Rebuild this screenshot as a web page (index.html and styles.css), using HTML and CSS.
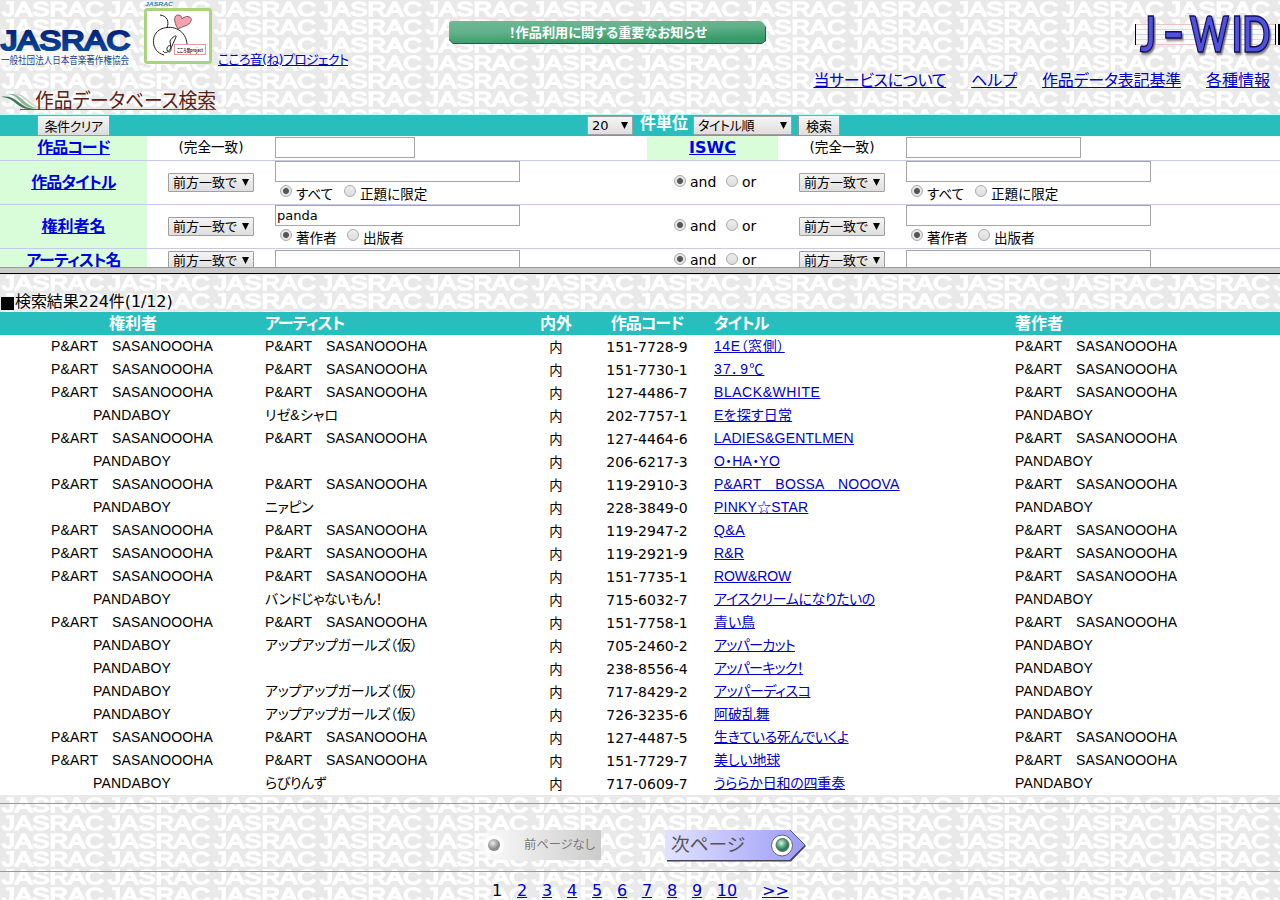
FILE: index.html
```html
<!DOCTYPE html>
<html lang="ja">
<head>
<meta charset="utf-8">
<title>J-WID 作品データベース検索</title>
<link rel="stylesheet" href="styles.css">
</head>
<body>
<section class="frame search-frame">
  <header class="masthead">
    <div class="brand">
      <svg class="logo" width="132" height="38" viewBox="0 28 132 38">
        <defs><linearGradient id="navy" x2="0" y2="1"><stop offset="0.2" stop-color="#06257c"/><stop offset="1" stop-color="#0b519f"/></linearGradient></defs>
        <rect y="50" width="131" height="15" fill="#fff" opacity=".65"/>
        <text class="wordmark" x="1" y="50" textLength="129" lengthAdjust="spacingAndGlyphs">JASRAC</text>
        <text class="company" x="1" y="64" textLength="128" lengthAdjust="spacingAndGlyphs">一般社団法人日本音楽著作権協会</text>
      </svg>
      <svg class="kokorone" width="70" height="65" viewBox="143 0 70 65">
        <text class="mini" x="145" y="6" textLength="28" lengthAdjust="spacingAndGlyphs">JASRAC</text>
        <rect x="145.500" y="9.500" width="65" height="53" rx="2" fill="#fff" stroke="#a9d47d" stroke-width="3"/>
        <path d="M160 15c8 1 9 7 7 13M164 55c-13-3-14-21-3-26 13-5 25 2 26 15M163 51c2 4 7 0 9-5l4-9c1-3-5 1-6 4l1 8c0 5-5 3-4-1 1-3 4-3 4-1" fill="none" stroke="#222"/>
        <path d="M178 29c-5-8-4-14 0-14 3 0 4 2 4 4 3-4 11-3 9 2-2 5-8 5-13 8z" fill="#f9a0ae" stroke="#644" stroke-width=".8"/>
        <rect x="174.500" y="44.500" width="31" height="10" fill="#fff" stroke="#e59aa2"/>
        <text class="tiny" x="177" y="51.500" textLength="26" lengthAdjust="spacingAndGlyphs">こころ音project</text>
      </svg>
      <a class="project" href="#">こころ音(ね)プロジェクト</a>
    </div>
    <svg class="notice" width="320" height="26" viewBox="447 19 320 26">
      <defs><linearGradient id="green" x2=".35" y2="1"><stop offset="0" stop-color="#6dba95"/><stop offset=".5" stop-color="#61b18a"/><stop offset="1" stop-color="#379a68"/></linearGradient></defs>
      <path d="M451 22h310l5 5v14l-4 3H453l-4-4z" fill="#245f43"/>
      <path d="M452 21h308q5 2 5 5v13q0 4-4 4H453l-4-4V24q0-3 3-3z" fill="url(#green)"/>
      <text x="509" y="37" textLength="198" lengthAdjust="spacingAndGlyphs">！作品利用に関する重要なお知らせ</text>
    </svg>
    <div class="right">
      <svg class="jwid" width="145" height="46" viewBox="1135 12 145 46">
        <rect x="1136" y="24" width="143" height="21" fill="#fff" opacity=".6"/>
        <path d="M1136 24.500h140M1136 44.500h140" stroke="#ebc4c4"/>
        <path d="M1136 29.500h140M1136 39.500h140" stroke="#d8d8e6"/><path d="M1136 34.500h140" stroke="#bee0e4"/>
        <path d="M1135.500 24v21M1275.500 24v21" stroke="#000"/><path d="M1279 24v21" stroke="#000" stroke-width="2"/>
        <text transform="translate(1140) scale(.75 1)" y="52">J<tspan class="dash" x="29" y="60">-</tspan><tspan x="66 122 136" y="52">WID</tspan></text>
      </svg>
      <nav class="menu">
        <a class="tight" href="#">当サービスについて</a><a href="#">ヘルプ</a><a class="slim" href="#">作品データ表記基準</a><a href="#">各種情報</a>
      </nav>
    </div>
  </header>
  <svg class="heading" width="220" height="26" viewBox="0 88 220 26">
    <path d="M12 94c15-3 17 13 34 14-20 1-18-13-34-14z" fill="#cbdccd"/>
    <path d="M7 94c14-3 18 14 32 14-20 2-17-13-32-14z" fill="#8ab596"/>
    <path d="M1 97c17-3 17 12 35 12-21 2-18-11-35-12z" fill="#31794b"/>
    <path d="M20 109.500h196" stroke="#31794b"/>
    <text x="35" y="108" textLength="181" lengthAdjust="spacingAndGlyphs">作品データベース検索</text>
  </svg>
  <form class="search">
    <div class="toolbar">
      <button class="clear" type="button">条件クリア</button>
      <select class="count"><option>20</option></select>
      <b>件単位</b>
      <select class="order"><option>タイトル順</option></select>
      <button class="go" type="button">検索</button>
    </div>
    <div class="row short">
      <div class="label"><a class="kana" href="#">作品コード</a></div>
      <div class="match">(完全一致)</div>
      <div class="field"><input class="w140" type="text"></div>
      <div class="label"><a href="#">ISWC</a></div>
      <div class="match">(完全一致)</div>
      <div class="field"><input class="w175" type="text"></div>
    </div>
    <div class="row">
      <div class="label"><a class="kana" href="#">作品タイトル</a></div>
      <div class="match"><select><option>前方一致で</option></select></div>
      <div class="field"><input type="text"><div class="opts"><input type="radio" name="t1" checked><span class="o1">すべて</span><input type="radio" name="t1"><span>正題に限定</span></div></div>
      <div class="logic"><input type="radio" name="l1" checked><span>and</span><input type="radio" name="l1"><span>or</span></div>
      <div class="match"><select><option>前方一致で</option></select></div>
      <div class="field"><input type="text"><div class="opts"><input type="radio" name="t2" checked><span class="o1">すべて</span><input type="radio" name="t2"><span>正題に限定</span></div></div>
    </div>
    <div class="row">
      <div class="label"><a href="#">権利者名</a></div>
      <div class="match"><select><option>前方一致で</option></select></div>
      <div class="field"><input type="text" value="panda"><div class="opts"><input type="radio" name="r1" checked><span class="o2">著作者</span><input type="radio" name="r1"><span>出版者</span></div></div>
      <div class="logic"><input type="radio" name="l2" checked><span>and</span><input type="radio" name="l2"><span>or</span></div>
      <div class="match"><select><option>前方一致で</option></select></div>
      <div class="field"><input type="text"><div class="opts"><input type="radio" name="r2" checked><span class="o2">著作者</span><input type="radio" name="r2"><span>出版者</span></div></div>
    </div>
    <div class="row last">
      <div class="label"><a class="kana" href="#">アーティスト名</a></div>
      <div class="match"><select><option>前方一致で</option></select></div>
      <div class="field"><input type="text"></div>
      <div class="logic"><input type="radio" name="l3" checked><span>and</span><input type="radio" name="l3"><span>or</span></div>
      <div class="match"><select><option>前方一致で</option></select></div>
      <div class="field"><input type="text"></div>
    </div>
  </form>
</section>
<section class="frame results-frame">
  <p class="summary"><i class="square"></i>検索結果224件(1/12)</p>
  <table class="results">
    <colgroup><col class="c1"><col class="c2"><col class="c3"><col class="c4"><col class="c5"><col class="c6"></colgroup>
    <thead><tr><th>権利者</th><th class="kana">アーティスト</th><th>内外</th><th class="kana">作品コード</th><th class="kana">タイトル</th><th>著作者</th></tr></thead>
    <tbody>
    <tr><td>P&amp;ART　SASANOOOHA</td><td>P&amp;ART　SASANOOOHA</td><td>内</td><td>151-7728-9</td><td><a class="wide" href="#">14E（窓側）</a></td><td>P&amp;ART　SASANOOOHA</td></tr>
    <tr><td>P&amp;ART　SASANOOOHA</td><td>P&amp;ART　SASANOOOHA</td><td>内</td><td>151-7730-1</td><td><a class="wider" href="#">37．9℃</a></td><td>P&amp;ART　SASANOOOHA</td></tr>
    <tr><td>P&amp;ART　SASANOOOHA</td><td>P&amp;ART　SASANOOOHA</td><td>内</td><td>127-4486-7</td><td><a class="wide" href="#">BLACK&amp;WHITE</a></td><td>P&amp;ART　SASANOOOHA</td></tr>
    <tr><td>PANDABOY</td><td>リゼ&amp;シャロ</td><td>内</td><td>202-7757-1</td><td><a href="#">Eを探す日常</a></td><td>PANDABOY</td></tr>
    <tr><td>P&amp;ART　SASANOOOHA</td><td>P&amp;ART　SASANOOOHA</td><td>内</td><td>127-4464-6</td><td><a href="#">LADIES&amp;GENTLMEN</a></td><td>P&amp;ART　SASANOOOHA</td></tr>
    <tr><td>PANDABOY</td><td></td><td>内</td><td>206-6217-3</td><td><a href="#">O・HA・YO</a></td><td>PANDABOY</td></tr>
    <tr><td>P&amp;ART　SASANOOOHA</td><td>P&amp;ART　SASANOOOHA</td><td>内</td><td>119-2910-3</td><td><a href="#">P&amp;ART　BOSSA　NOOOVA</a></td><td>P&amp;ART　SASANOOOHA</td></tr>
    <tr><td>PANDABOY</td><td class="narrow">ニァピン</td><td>内</td><td>228-3849-0</td><td><a href="#">PINKY☆STAR</a></td><td>PANDABOY</td></tr>
    <tr><td>P&amp;ART　SASANOOOHA</td><td>P&amp;ART　SASANOOOHA</td><td>内</td><td>119-2947-2</td><td><a class="wide" href="#">Q&amp;A</a></td><td>P&amp;ART　SASANOOOHA</td></tr>
    <tr><td>P&amp;ART　SASANOOOHA</td><td>P&amp;ART　SASANOOOHA</td><td>内</td><td>119-2921-9</td><td><a href="#">R&amp;R</a></td><td>P&amp;ART　SASANOOOHA</td></tr>
    <tr><td>P&amp;ART　SASANOOOHA</td><td>P&amp;ART　SASANOOOHA</td><td>内</td><td>151-7735-1</td><td><a class="even" href="#">ROW&amp;ROW</a></td><td>P&amp;ART　SASANOOOHA</td></tr>
    <tr><td>PANDABOY</td><td class="narrow">バンドじゃないもん！</td><td>内</td><td>715-6032-7</td><td><a class="narrow" href="#">アイスクリームになりたいの</a></td><td>PANDABOY</td></tr>
    <tr><td>P&amp;ART　SASANOOOHA</td><td>P&amp;ART　SASANOOOHA</td><td>内</td><td>151-7758-1</td><td><a class="even" href="#">青い鳥</a></td><td>P&amp;ART　SASANOOOHA</td></tr>
    <tr><td>PANDABOY</td><td class="slim">アップアップガールズ（仮）</td><td>内</td><td>705-2460-2</td><td><a class="narrower" href="#">アッパーカット</a></td><td>PANDABOY</td></tr>
    <tr><td>PANDABOY</td><td></td><td>内</td><td>238-8556-4</td><td><a class="narrower" href="#">アッパーキック！</a></td><td>PANDABOY</td></tr>
    <tr><td>PANDABOY</td><td class="slim">アップアップガールズ（仮）</td><td>内</td><td>717-8429-2</td><td><a class="narrow" href="#">アッパーディスコ</a></td><td>PANDABOY</td></tr>
    <tr><td>PANDABOY</td><td class="slim">アップアップガールズ（仮）</td><td>内</td><td>726-3235-6</td><td><a class="even" href="#">阿破乱舞</a></td><td>PANDABOY</td></tr>
    <tr><td>P&amp;ART　SASANOOOHA</td><td>P&amp;ART　SASANOOOHA</td><td>内</td><td>127-4487-5</td><td><a class="narrow" href="#">生きている死んでいくよ</a></td><td>P&amp;ART　SASANOOOHA</td></tr>
    <tr><td>P&amp;ART　SASANOOOHA</td><td>P&amp;ART　SASANOOOHA</td><td>内</td><td>151-7729-7</td><td><a class="slim" href="#">美しい地球</a></td><td>P&amp;ART　SASANOOOHA</td></tr>
    <tr><td>PANDABOY</td><td class="narrow">らびりんず</td><td>内</td><td>717-0609-7</td><td><a class="slim" href="#">うららか日和の四重奏</a></td><td>PANDABOY</td></tr>
    </tbody>
  </table>
  <div class="pager">
    <svg width="122" height="34" viewBox="480 829 122 34">
      <defs>
        <linearGradient id="grey"><stop offset="0" stop-color="#fff" stop-opacity=".5"/><stop offset=".25" stop-color="#f2f2f2"/><stop offset="1" stop-color="#ccc"/></linearGradient>
        <radialGradient id="pearl" cx=".4" cy=".35"><stop offset="0" stop-color="#eee"/><stop offset="1" stop-color="#888"/></radialGradient>
      </defs>
      <path d="M474 845l15-15h112v30H489z" fill="url(#grey)"/>
      <circle cx="494" cy="845" r="10" fill="#fff" opacity=".8"/><circle cx="494" cy="845" r="6" fill="url(#pearl)"/>
      <text class="prev" x="524" y="849" textLength="71" lengthAdjust="spacingAndGlyphs">前ページなし</text>
    </svg>
    <svg width="144" height="34" viewBox="664 829 144 34">
      <defs>
        <linearGradient id="violet"><stop offset="0" stop-color="#e2e2ff"/><stop offset="1" stop-color="#9c9cf8"/></linearGradient>
        <radialGradient id="jade" cx=".4" cy=".35"><stop offset="0" stop-color="#d8f4e6"/><stop offset=".6" stop-color="#5fae88"/><stop offset="1" stop-color="#33795a"/></radialGradient>
      </defs>
      <path d="M667 832h124l15 14-15 15.500H667z" fill="#445"/>
      <path d="M665 830h125l15 15-15 15H665z" fill="url(#violet)"/>
      <path d="M790 830l15 15-15 15" fill="none" stroke="#557" />
      <circle cx="782" cy="845.500" r="10.500" fill="#fff" stroke="#666"/><circle cx="782.500" cy="845" r="6.500" fill="url(#jade)" stroke="#576"/>
      <text class="next" x="671" y="851" textLength="74" lengthAdjust="spacingAndGlyphs">次ページ</text>
    </svg>
  </div>
  <nav class="pages"><span>1</span><a href="#">2</a><a href="#">3</a><a href="#">4</a><a href="#">5</a><a href="#">6</a><a href="#">7</a><a href="#">8</a><a href="#">9</a><a href="#">10</a><a class="fwd" href="#">&gt;&gt;</a></nav>
</section>
</body>
</html>
```
FILE: styles.css
```css
* { box-sizing: border-box; }
body {
  margin: 0;
  height: 900px;
  overflow: hidden;
  font: 16px/20px "DejaVu Sans", "Noto Sans CJK JP", sans-serif;
  font-feature-settings: "palt";
  color: #000;
}
a { color: #0000cc; }
svg { display: block; overflow: visible; }
svg text { font-family: "Noto Sans CJK JP", sans-serif; }

.frame {
  overflow: hidden;
  background: #e9e9e9 url("data:image/svg+xml,%3Csvg xmlns='http://www.w3.org/2000/svg' width='106' height='18'%3E%3Ctext x='2' y='15.500' textLength='102' lengthAdjust='spacingAndGlyphs' font-family='Liberation Sans' font-size='20.500' fill='white' stroke='white' stroke-width='1.500'%3EJASRAC%3C/text%3E%3C/svg%3E");
}
.search-frame { height: 274px; border-bottom: 1px solid #000; position: relative; }
.search-frame::after { content: ""; position: absolute; left: 0; right: 0; bottom: 0; height: 5px; background: #ccc; border-top: 1px solid #999; }
.results-frame { height: 626px; }

.masthead { display: flex; height: 88px; }
.brand { display: flex; width: 447px; height: 70px; }
.logo { margin-top: 28px; }
.kokorone { margin-left: 11px; }
.project { margin: 50px 0 0 5px; font-size: 13px; letter-spacing: -.75px; white-space: nowrap; }
svg .wordmark { font: 27px "Liberation Sans", sans-serif; fill: url(#navy); stroke: url(#navy); stroke-width: 2.200px; }
.company { font-size: 10px; fill: #18448c; }
svg .mini { font: bold italic 6px "Liberation Sans", sans-serif; fill: #2e7fae; }
.tiny { font-size: 5px; font-weight: bold; fill: #412; }
.notice { margin-top: 19px; }
.notice text { font-size: 13px; font-weight: bold; fill: #fff; }
.right { flex: 1; }
.jwid { margin: 12px 0 0 auto; }
.jwid text { font: bold 50px Lato, sans-serif; fill: #5151e0; stroke: #101058; stroke-width: 1.500px; filter: drop-shadow(2px 2px 1px #777); }
.jwid .dash { font-size: 84px; font-weight: 400; }
.menu { display: flex; justify-content: flex-end; gap: 25px; margin: 13px 10px 0 0; white-space: nowrap; }
.menu .tight { letter-spacing: -.33px; }
.heading text { font-size: 20px; fill: #5b2014; }

.toolbar { display: flex; height: 21px; align-items: center; background: #28bebd; }
.search { border-top: 1px solid #b4ffff; }
button, select, input { font: 13px "DejaVu Sans", "Noto Sans CJK JP", sans-serif; font-feature-settings: "palt"; margin: 0; color: #000; }
button { height: 21px; padding: 0; border: 1px solid #999; border-radius: 1px; background: linear-gradient(#f6f6f6, #ddd); white-space: nowrap; }
select {
  appearance: none;
  width: 86px;
  height: 19px;
  padding: 0 0 0 4px;
  border: 1px solid #a0a0a0;
  border-radius: 1px;
  background: url("data:image/svg+xml,%3Csvg xmlns='http://www.w3.org/2000/svg' width='7' height='7'%3E%3Cpath d='M0 0h7L3.500 7z'/%3E%3C/svg%3E") no-repeat right 4px center, linear-gradient(#f4f4f4, #dedede);
}
.clear { width: 73px; margin-left: 37px; letter-spacing: -.5px; }
.count { width: 46px; margin-left: 477px; }
.toolbar b { width: 60px; padding-left: 7px; color: #fff; line-height: 18px; align-self: flex-start; white-space: nowrap; }
.order { width: 99px; letter-spacing: -.4px; }
.go { width: 42px; margin-left: 6px; }

.row { display: grid; grid-template-columns: 147px 128px 372px 131px 128px 374px; height: 44px; border-bottom: 1px solid #c8c8e8; background: #fff; }
.row.short { height: 25px; }
.row.last { height: 24px; }
.label { display: flex; align-items: center; justify-content: center; background: #d8fdd8; font-weight: bold; }
.row:not(.short) .logic { background: #fff; }
.label a { color: #0000e6; }
.kana { letter-spacing: -.9px; }
.match { display: flex; align-items: center; justify-content: center; font-size: 14px; }
.short .match { padding-bottom: 3px; font-size: 13.600px; }
.field input[type=text] { display: block; width: 245px; height: 21px; padding: 0 1px; border: 1px solid #a5a5a5; background: #fff; }
.short .field, .last .field { padding-top: 1px; }
.field .w140[type=text] { width: 140px; }
.field .w175[type=text] { width: 175px; }
input[type=radio] { appearance: none; width: 12px; height: 12px; border: 1px solid #aaa; border-radius: 50%; background: linear-gradient(#eee, #ddd); }
input[type=radio]:checked { background: radial-gradient(circle, #555 0 2.500px, #e6e6e6 3.500px); }
.opts { display: flex; align-items: flex-start; padding: 3px 0 0 5px; font-size: 13.600px; line-height: 14px; white-space: nowrap; }
.opts span { margin: 2px 0 0 4px; }
.opts .o1 { width: 48px; }
.opts .o2 { width: 51px; }
.logic { display: flex; align-items: center; padding: 0 0 1px 27px; font-size: 14px; }
.logic input { margin-bottom: 2px; }
.logic span { width: 36px; margin-left: 4px; }

.summary { display: flex; align-items: center; height: 20px; margin: 18px 0 0; line-height: 22px; letter-spacing: -.1px; }
.square { width: 13px; height: 13px; margin: 3px 1px 0; background: #000; }
.results { width: 1280px; table-layout: fixed; border-collapse: collapse; background: #fff; }
.c1 { width: 264px; }
.c2 { width: 257px; }
.c3 { width: 70px; }
.c4 { width: 112px; }
.c5 { width: 301px; }
.c6 { width: 276px; }
th, td { height: 23px; padding: 0; line-height: 21px; text-align: center; white-space: nowrap; }
th { background: #28bebd; color: #fff; line-height: 23px; }
th:first-child { padding-left: 2px; }
td { font-family: "Liberation Sans", "Noto Sans CJK JP", sans-serif; font-size: 14px; letter-spacing: .15px; }
td:nth-child(3), td:nth-child(4) { padding-top: 2px; font-family: "DejaVu Sans", "Noto Sans CJK JP", sans-serif; letter-spacing: 0; }
td:nth-child(3) { font-size: 13.300px; }
tr > :nth-child(2) { padding-left: 1px; text-align: left; }
tr > :nth-child(5), tr > :nth-child(6) { padding-left: 11px; text-align: left; }
td a { letter-spacing: .2px; }
.wide { letter-spacing: .55px; }
.wider { letter-spacing: 1.200px; }
.even { letter-spacing: -.1px; }
.slim { letter-spacing: -.2px; }
.narrow { letter-spacing: -.42px; }
.narrower { letter-spacing: -.7px; }

.pager { display: flex; gap: 62px; height: 69px; margin-top: 8px; padding: 25px 0 0 480px; border: 1px solid #999; border-width: 1px 0; }
.prev { font-size: 12px; fill: #777; }
.next { font-size: 18px; fill: #555; }
.pages { display: flex; gap: 14.800px; padding: 9px 0 0 492px; }
.pages .fwd { margin-left: 10px; }
```
